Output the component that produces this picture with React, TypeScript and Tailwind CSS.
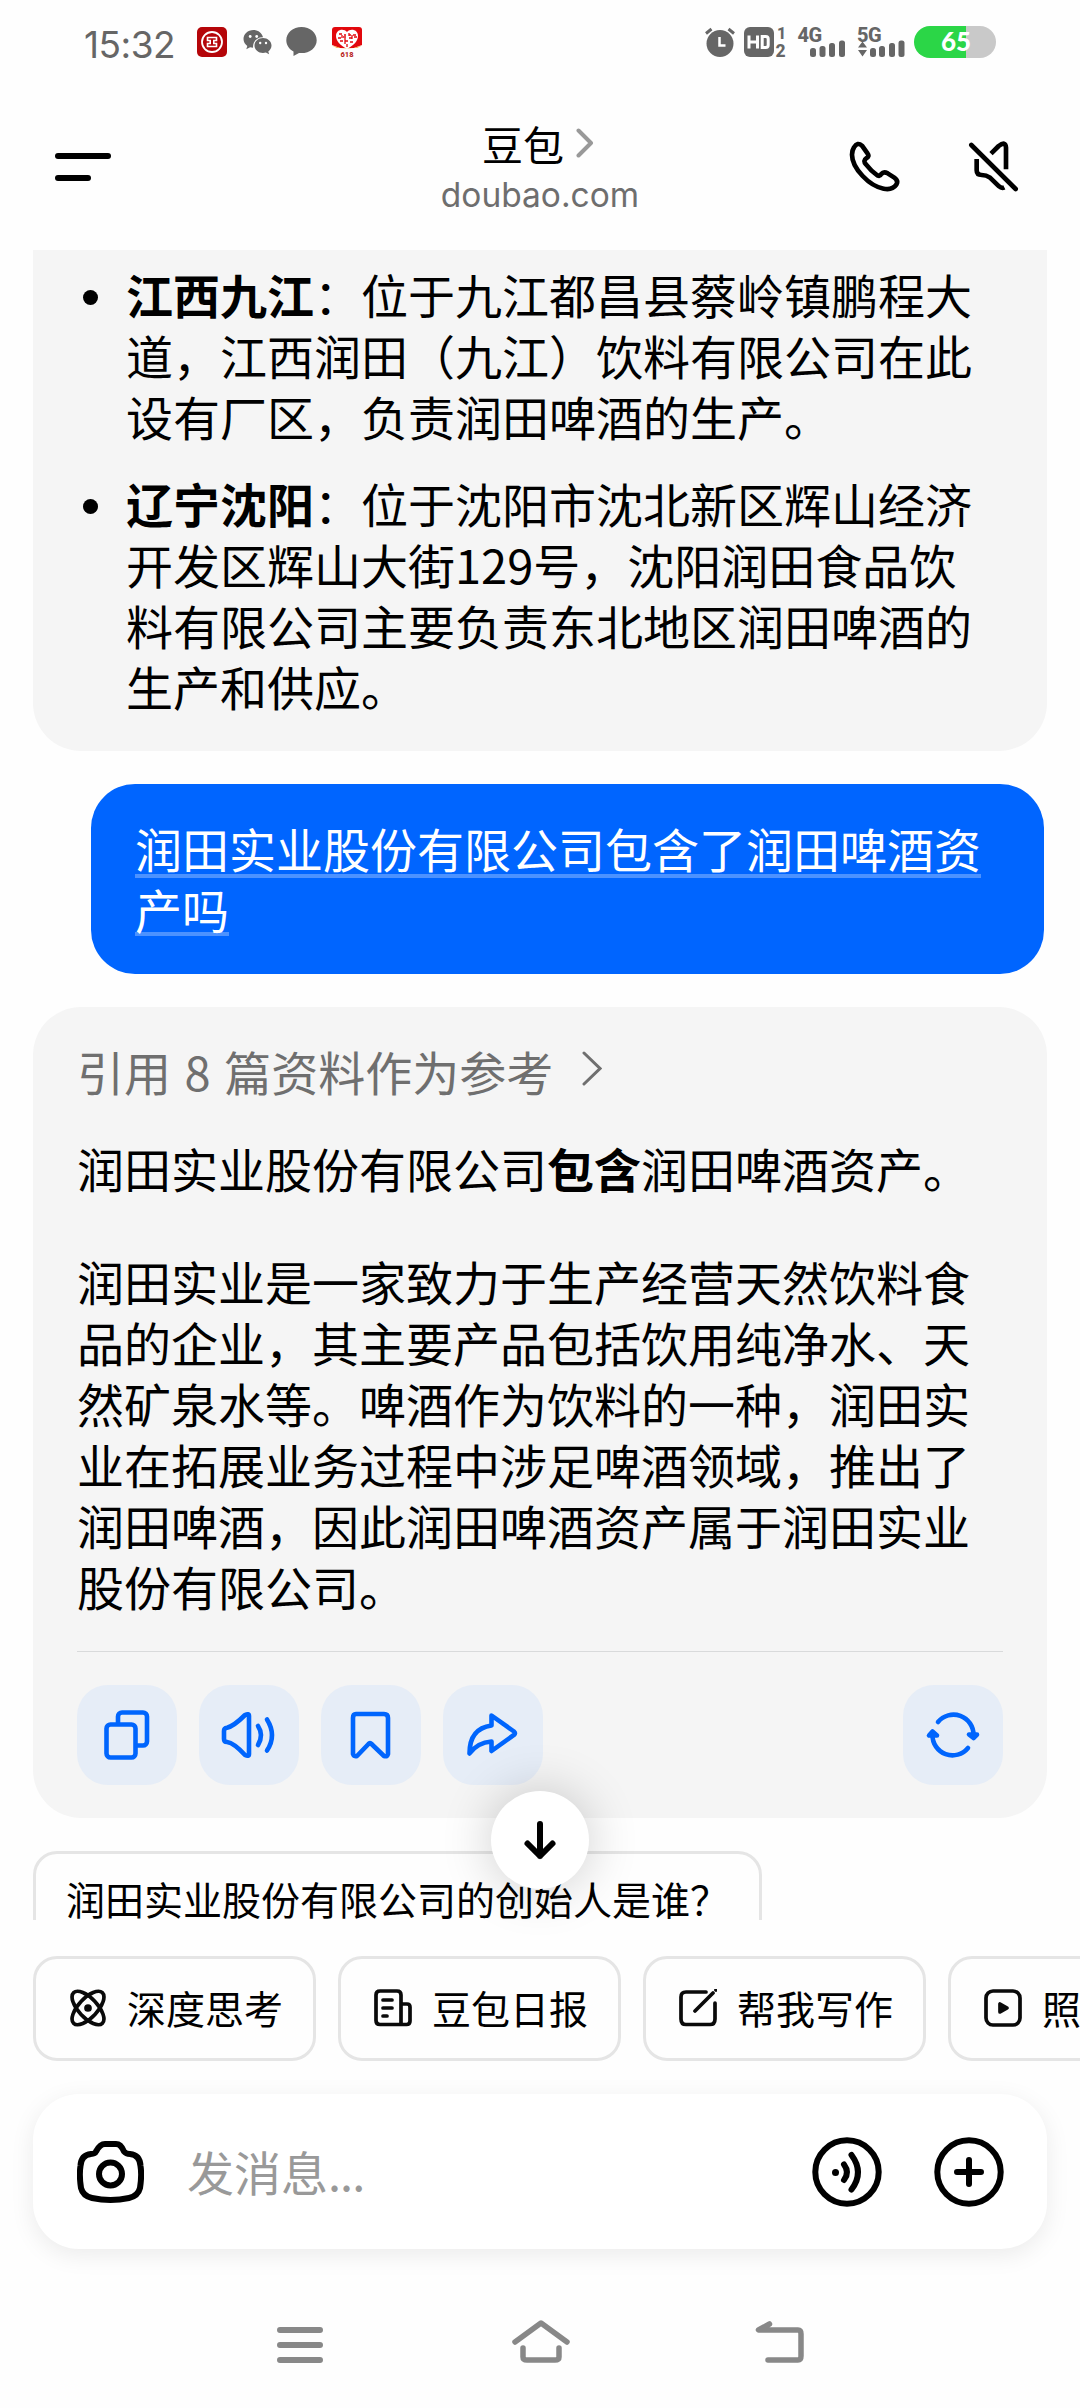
import type { ReactNode } from 'react';

const TEXT = 'text-[47px] leading-[61px] whitespace-nowrap';

const locations = [
  {
    name: '江西九江',
    lines: ['：位于九江都昌县蔡岭镇鹏程大', '道，江西润田（九江）饮料有限公司在此', '设有厂区，负责润田啤酒的生产。'],
  },
  {
    name: '辽宁沈阳',
    lines: [
      '：位于沈阳市沈北新区辉山经济',
      '开发区辉山大街129号，沈阳润田食品饮',
      '料有限公司主要负责东北地区润田啤酒的',
      '生产和供应。',
    ],
  },
];

const answer = [
  '润田实业是一家致力于生产经营天然饮料食',
  '品的企业，其主要产品包括饮用纯净水、天',
  '然矿泉水等。啤酒作为饮料的一种，润田实',
  '业在拓展业务过程中涉足啤酒领域，推出了',
  '润田啤酒，因此润田啤酒资产属于润田实业',
  '股份有限公司。',
];

function StatusBar() {
  return (
    <div className="h-[84px] pl-[84px] pr-[84px] flex items-center justify-between text-[#666]">
      <div className="flex items-center h-[84px]">
        <span className="w-[113px] text-[37px] leading-none font-['Inter'] tracking-[-0.5px] pt-[5px]">15:32</span>
        <svg width="30" height="30" viewBox="0 0 30 30">
          <rect width="30" height="30" rx="5" fill="#b50509" />
          <circle cx="15" cy="15" r="10" fill="none" stroke="#fff" strokeWidth="1.8" />
          <path d="M10.500 10.500h9v3h-2.700v3h2.700v3h-9v-3h2.700v-3h-2.700z" fill="none" stroke="#fff" strokeWidth="1.6" />
        </svg>
        <svg className="ml-[16px]" width="30" height="26" viewBox="0 0 30 26" fill="#666">
          <path d="M10.500 1C4.700 1 0.500 5 0.500 10c0 2.900 1.500 5.300 3.800 7l-1 3.300 3.800-2a12 12 0 0 0 3 .5C9.500 12.500 14 8 20 8.200 19 4 15.200 1 10.500 1z" />
          <path d="M28.500 16.400c0-4.200-3.900-7.500-8.500-7.500s-8.500 3.300-8.500 7.500 3.900 7.500 8.500 7.500c1 0 2-.2 2.900-.4l3.200 1.700-.8-2.800c2-1.500 3.200-3.600 3.200-6z" />
          <circle cx="7.200" cy="7.500" r="1.400" fill="#fff" />
          <circle cx="13.700" cy="7.500" r="1.400" fill="#fff" />
          <circle cx="17.200" cy="14" r="1.200" fill="#fff" />
          <circle cx="23" cy="14" r="1.200" fill="#fff" />
        </svg>
        <svg className="ml-[13px]" width="31" height="30" viewBox="0 0 31 30" fill="#666">
          <path d="M15.500 0C7 0 .3 5.700.3 13.200c0 4.900 2.900 9 7.200 11.300v4.500l5.500-3c10 1 17.700-5 17.700-12.800C30.700 5.700 24 0 15.500 0z" />
        </svg>
        <svg className="ml-[14px]" width="32" height="30" viewBox="0 0 32 30">
          <path d="M4 0h24a3 3 0 0 1 3 3v15l-8 3H9l-8-3V3a3 3 0 0 1 3-3z" fill="#e2080d" />
          <path d="M1 18.500q15 6 30 0l-5 2.500H6z" fill="#f7a53a" />
          <path d="M16 5c3-4 11-3 11 4 0 5-4 9-11 13C9 18 5 14 5 9c0-7 8-8 11-4z" fill="#fff" />
          <path d="M8 7h3m2 1h2m3 0h2m2 0h3M7 11h3m2-1h3m3 1h3m2-1h3M9 14h3m2 0h3m2 1h3M14 11v6M18 6v3M11 8v3M21 8v4M16 17v3" stroke="#e2080d" strokeWidth="1.300" />
          <text x="16" y="29.500" fontSize="7.500" fontWeight="800" textAnchor="middle" fill="#b8231c" fontFamily="Roboto">618</text>
        </svg>
      </div>
      <div className="flex items-center h-[84px]">
        <svg width="210" height="34" viewBox="704 25 210 34" fill="#666" fontFamily="Roboto" fontWeight="800">
          {/* alarm clock */}
          <circle cx="720" cy="43.500" r="13.500" />
          <path d="M706 33.500l5.500-4.500M734 33.500l-5.500-4.500" stroke="#666" strokeWidth="3" />
          <path d="M719.500 37v8.500h6" fill="none" stroke="#fff" strokeWidth="2.500" />
          {/* HD voice */}
          <rect x="744" y="27" width="30" height="30" rx="6" />
          <path d="M749 35.500v13M757.500 35.500v13M749 42h8.500M762.200 36.500h3.500q2.500 0 2.500 2.500v6q0 2.500-2.500 2.500h-3.500z" fill="none" stroke="#fff" strokeWidth="3" />
          <text x="777" y="39" fontSize="16">1</text>
          <text x="775.500" y="57" fontSize="17.500">2</text>
          {/* signals */}
          <text x="797.500" y="41.500" fontSize="20" letterSpacing="-0.5">4G</text>
          <rect x="810" y="48" width="6" height="9" rx="2.500" />
          <rect x="819.500" y="46" width="6" height="11" rx="2.500" />
          <rect x="829" y="43" width="6" height="14" rx="2.500" />
          <rect x="839" y="40.500" width="6" height="16.500" rx="2.500" />
          <text x="857" y="41.500" fontSize="20" letterSpacing="-0.5">5G</text>
          <path d="M858 47.500l4.500-6 4.500 6zM858 50l4.500 6.500 4.500-6.500z" />
          <rect x="870" y="48" width="6" height="9" rx="2.500" />
          <rect x="879" y="46" width="6" height="11" rx="2.500" />
          <rect x="889" y="43" width="6" height="14" rx="2.500" />
          <rect x="898.500" y="40.500" width="6" height="16.500" rx="2.500" />
        </svg>
        <div className="w-[82px] h-[32px] rounded-full bg-[linear-gradient(to_right,#2bd647_63%,#c9c9c9_63%)] text-white text-[26px] leading-[31px] font-black font-['Lato'] text-center pl-[2px]">
          65
        </div>
      </div>
    </div>
  );
}

function Header() {
  return (
    <header className="h-[166px] px-[55px] flex justify-between">
      <div className="w-[300px] pt-[69px] flex flex-col gap-[16px]">
        <span className="block w-[56px] h-[6px] rounded-full bg-black" />
        <span className="block w-[36px] h-[6px] rounded-full bg-black" />
      </div>
      <div className="flex flex-col items-center pt-[34px]">
        <div className="flex items-center gap-[12px] h-[50px] pr-[4px]">
          <span className="text-[41px] leading-[50px]">豆包</span>
          <svg width="18" height="32" viewBox="0 0 18 32" fill="none" stroke="#999" strokeWidth="4" strokeLinecap="round" strokeLinejoin="round">
            <path d="M2.500 3.500L15 16 2.500 28.500" />
          </svg>
        </div>
        <span className="text-[33.5px] leading-[42px] text-[#6e6e6e] font-['Inter'] mt-[6px]">doubao.com</span>
      </div>
      <div className="w-[300px] flex justify-end gap-[68px] pt-[57px] pr-[6px]">
        <svg width="51" height="51" viewBox="87 63 153 153" fill="none" stroke="#000" strokeWidth="14" strokeLinejoin="round" strokeLinecap="round">
          <path d="M102 82Q112 65 126 77L143 101Q149 109 139 115Q128 122 138 133Q154 154 172 166Q180 170 184 162Q191 153 203 160L223 173Q236 182 229 194Q217 211 191 206Q158 200 128 168Q96 134 96 104Q96 91 102 82Z" />
        </svg>
        <svg width="51" height="51" viewBox="443 63 153 153" fill="none" stroke="#000" strokeWidth="14" strokeLinejoin="round">
          <path d="M453 75L586 207" strokeLinecap="round" />
          <path d="M512 101L535 78Q556 62 557 83V148" />
          <path d="M469 117V151Q469 165 484 165Q498 165 509 173L536 199Q544 206 552 202" />
        </svg>
      </div>
    </header>
  );
}

function ActionButton({ children }: { children: ReactNode }) {
  return <button className="size-[100px] rounded-[31px] bg-[#e6edf7] flex items-center justify-center shrink-0">{children}</button>;
}

function Actions() {
  const stroke = { fill: 'none', stroke: '#0065fd', strokeWidth: 4.6, strokeLinejoin: 'round', strokeLinecap: 'round' } as const;
  return (
    <div className="flex gap-[22px] mt-[33px]">
      <ActionButton>
        <svg width="100" height="100" viewBox="0 0 100 100" {...stroke}>
          <rect x="29.500" y="39.500" width="29" height="33" rx="4" />
          <path d="M41 38v-6.500a4 4 0 0 1 4-4h21a4 4 0 0 1 4 4v25a4 4 0 0 1-4 4h-5.500" />
        </svg>
      </ActionButton>
      <ActionButton>
        <svg width="100" height="100" viewBox="0 0 100 100" {...stroke}>
          <path d="M25 46q0-3 3-3.300Q35 41 46 30q4-2 4 1v38q0 3-4 1Q35 58 28 57q-3 0-3-3z" />
          <path d="M59 41q6 9 0 19" />
          <path d="M68 34.500q10 16 0 31" />
        </svg>
      </ActionButton>
      <ActionButton>
        <svg width="100" height="100" viewBox="0 0 100 100" {...stroke}>
          <path d="M35 29h28q4 0 4 4v36q-1 3-4 2L50.500 59q-1.500-2-3 0L36 71q-3 1-4-2V33q0-4 3-4z" />
        </svg>
      </ActionButton>
      <ActionButton>
        <svg width="100" height="100" viewBox="0 0 100 100" {...stroke}>
          <path d="M48.500 30.500L71 46.500q2 1.700 0 3.400L48.500 66V56.500q-14 1-22 12 0-25 22-28z" />
        </svg>
      </ActionButton>
      <div className="flex-1" />
      <ActionButton>
        <svg width="100" height="100" viewBox="0 0 100 100" {...stroke}>
          <path d="M35 37a20 20 0 0 1 35.500 13" />
          <path d="M65 63a20 20 0 0 1-35.500-13" />
          <path d="M66 49.500h8L70.500 53zM26 50.500h8L29.500 46.500z" fill="#0065fd" />
        </svg>
      </ActionButton>
    </div>
  );
}

function Chip({ label, children }: { label: string; children: ReactNode }) {
  return (
    <div className="w-[283px] h-[105px] shrink-0 border-3 border-[#e5e5e5] rounded-[24px] pl-[33px] flex items-center">
      <svg className="mb-px shrink-0" width="38" height="38" viewBox="0 0 38 38" fill="none" stroke="#0a0a0a" strokeWidth="3.700" strokeLinecap="round" strokeLinejoin="round">
        {children}
      </svg>
      <span className="ml-[20px] mb-[3px] text-[39px] leading-[50px] whitespace-nowrap">{label}</span>
    </div>
  );
}

export default function App() {
  return (
    <div className="relative w-[1080px] h-[2408px] overflow-hidden bg-[#fefefe] text-black font-['Noto_Sans_CJK_SC',sans-serif]">
      <StatusBar />
      <Header />

      {/* Conversation */}
      <main className="h-[1670px] px-[33px] overflow-hidden">
        <section className="h-[501px] bg-[#f5f5f5] rounded-b-[48px] pl-[93px] pt-[13px]">
          {locations.map((loc) => (
            <div key={loc.name} className={`${TEXT} relative mb-[26px]`}>
              <span className="absolute left-[-43px] top-[27px] size-[15px] rounded-full bg-black" />
              {loc.lines.map((line, i) => (
                <p key={line}>
                  {i === 0 && <b>{loc.name}</b>}
                  {line}
                </p>
              ))}
            </div>
          ))}
        </section>

        <section className={`${TEXT} ml-[58px] mr-[3px] mt-[33px] h-[190px] rounded-[44px] bg-[#0065ff] text-white pl-[44px] pt-[33px]`}>
          <p>
            <span className="underline decoration-[#4c92ff] decoration-[4px] underline-offset-[6px] [text-decoration-skip-ink:none]">润田实业股份有限公司包含了润田啤酒资</span>
          </p>
          <p>
            <span className="underline decoration-[#4c92ff] decoration-[4px] underline-offset-[3px] [text-decoration-skip-ink:none]">产吗</span>
          </p>
        </section>

        <section className={`${TEXT} mt-[33px] h-[811px] rounded-[48px] bg-[#f5f5f5] px-[44px] pt-[33px]`}>
          <div className="flex items-center text-[#6f6f6f]">
            <span className="[word-spacing:3px]">引用 8 篇资料作为参考</span>
            <svg className="ml-[29px] mb-[3px]" width="20" height="36" viewBox="0 0 20 36" fill="none" stroke="#6f6f6f" strokeWidth="3" strokeLinecap="round">
              <path d="M2 2l16 15.500L2 33" />
            </svg>
          </div>
          <p className="mt-[36px]">
            润田实业股份有限公司<b>包含</b>润田啤酒资产。
          </p>
          <div className="mt-[52px]">
            {answer.map((line) => (
              <p key={line}>{line}</p>
            ))}
          </div>
          <div className="mt-[35px] h-px bg-[#d9dadb]" />
          <Actions />
        </section>

        <div className="mt-[33px] w-[729px] h-[120px] rounded-[24px] border-3 border-[#e5e5e5] pl-[30px] pt-[19px] text-[39px] leading-[50px] whitespace-nowrap">
          润田实业股份有限公司的创始人是谁？
        </div>
      </main>

      {/* Scroll to bottom */}
      <button className="absolute left-[491px] top-[1791px] size-[98px] rounded-full bg-white shadow-[0_0_52px_rgba(0,0,0,0.2)] flex items-center justify-center">
        <svg width="40" height="46" viewBox="0 0 40 46" fill="none" stroke="#000" strokeWidth="6" strokeLinecap="round" strokeLinejoin="round">
          <path d="M20 7v32M7.500 26.500L20 39l12.500-12.500" />
        </svg>
      </button>

      {/* Shortcuts */}
      <div className="relative mt-[36px] pl-[33px] flex gap-[22px]">
        <Chip label="深度思考">
          <ellipse cx="19" cy="19" rx="21" ry="9.500" transform="rotate(47 19 19)" />
          <ellipse cx="19" cy="19" rx="21" ry="9.500" transform="rotate(-47 19 19)" />
          <circle cx="19" cy="19" r="2" fill="#0a0a0a" />
        </Chip>
        <Chip label="豆包日报">
          <path d="M27 35.500H6q-4 0-4-4V6q0-4 4-4h17q4 0 4 4v29.500zM27 15h6q3 0 3 3v14q0 3.500-3.500 3.500H27M9 11h9M9 19h9M9 27h4" />
        </Chip>
        <Chip label="帮我写作">
          <path d="M27 3H7Q2 3 2 8v22q0 5.500 5 5.500h24q5 0 5-5.500V14M16 22L34 4M38 0l-1 1" />
        </Chip>
        <Chip label="照片动起来">
          <rect x="2" y="2" width="34" height="34" rx="7" />
          <path d="M16 15v8l7-4z" fill="#0a0a0a" />
        </Chip>
      </div>

      {/* Message input */}
      <div className="relative mt-[33px] mx-[33px] h-[155px] rounded-[46px] bg-white shadow-[0_6px_24px_rgba(0,0,0,0.08)] pl-[44px] pr-[43px] flex items-center">
        <svg width="67" height="62" viewBox="0 0 67 62" fill="none" stroke="#000" strokeWidth="6" strokeLinejoin="round">
          <path d="M19 10.500Q23 3 28 3H39Q44 3 47 10.500Q49 13 53 13Q63 14 63.500 25Q65 34 63 47Q61 55 52 57Q33.500 61 15 57Q6 55 4 47Q2 34 3.500 25Q4 14 14 13Q18 13 19 10.500Z" />
          <circle cx="33.500" cy="33" r="11.500" />
        </svg>
        <span className="ml-[43px] mb-[2px] flex-1 text-[47px] leading-[61px] text-[#999]">
          发消息<span className="tracking-[-1px]">...</span>
        </span>
        <svg width="70" height="70" viewBox="0 0 70 70" fill="none" stroke="#000" strokeWidth="6" strokeLinecap="round">
          <circle cx="35" cy="35" r="31.700" />
          <circle cx="23.500" cy="35.500" r="3.500" fill="#000" stroke="none" />
          <path d="M32 27.500q6 8 0 15.500M39.500 18q13 17.500 0 34.500" />
        </svg>
        <svg className="ml-[52px]" width="70" height="70" viewBox="0 0 70 70" fill="none" stroke="#000" strokeWidth="6" strokeLinecap="round">
          <circle cx="35" cy="35" r="31.700" />
          <path d="M35 23v24M23 35h24" />
        </svg>
      </div>

      {/* System navigation */}
      <nav className="mt-[69px] pl-[277px] pr-[275px] flex justify-between">
        <svg width="46" height="50" viewBox="277 2318 46 50" fill="none" stroke="#888" strokeWidth="6" strokeLinecap="round">
          <path d="M280 2330h40M280 2345h40M280 2360h40" />
        </svg>
        <svg className="ml-[3px]" width="60" height="50" viewBox="510 2318 60 50" fill="none" stroke="#888" strokeWidth="5.500" strokeLinecap="round" strokeLinejoin="round">
          <path d="M514 2342l26-19 26 19M522 2348v9q0 3 4 3h28q4 0 4-3v-9" />
        </svg>
        <svg width="50" height="50" viewBox="755 2318 50 50" fill="none" stroke="#888" strokeWidth="5.500" strokeLinecap="round" strokeLinejoin="round">
          <path d="M769.500 2324l-11 6H798q3 0 3 4v22q0 4-3 4h-30" />
        </svg>
      </nav>
    </div>
  );
}
